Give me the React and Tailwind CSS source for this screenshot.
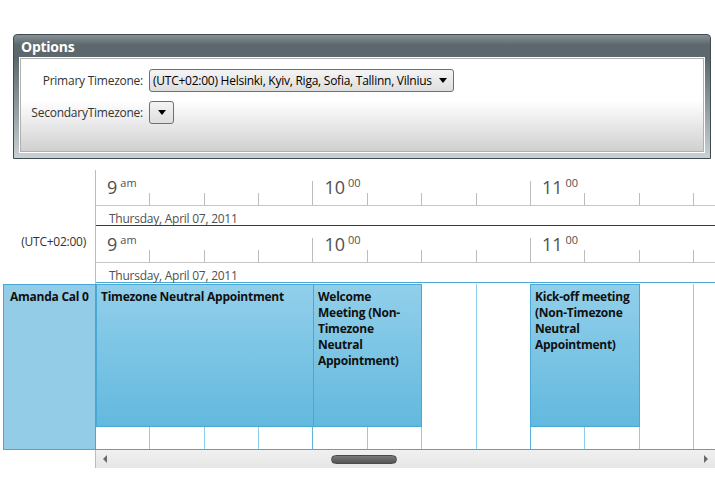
import React from "react";

const HOURS = [
  { h: "9", sup: "am" },
  { h: "10", sup: "00" },
  { h: "11", sup: "00" },
];

function HourHeader({ tall }) {
  return (
    <div className={`flex ${tall ? "h-[37px]" : "h-[36px]"} border-b border-[#c6c6c6]`}>
      {HOURS.map((hr) =>
        [0, 1, 2, 3].map((q) => (
          <div key={hr.h + q} className="w-[54.36px] shrink-0 flex flex-col justify-end">
            {q === 0 && (
              <div className="pl-[11px] h-[12px] leading-[12px] whitespace-nowrap text-[#505050] tracking-normal">
                <span className="text-[18px]">{hr.h}</span>
                <span className="text-[11px] relative -top-[7px] ml-[3px]">{hr.sup}</span>
              </div>
            )}
            <div className={`${q === 3 ? "h-[24px]" : "h-[12px]"} border-r border-[#bcbcbc]`} />
          </div>
        ))
      )}
    </div>
  );
}

function DateRow({ dark }) {
  return (
    <div
      className={`h-[20px] pl-[13px] pt-[5px] text-[12px] leading-[15px] text-[#505050] border-b ${
        dark ? "border-[#3a3a3a]" : "border-[#4aa6d3]"
      }`}
    >
      Thursday, April 07, 2011
    </div>
  );
}

function Appointment({ left, width, children }) {
  return (
    <div
      className="absolute top-0 h-[143px] border border-[#4aa8d5] bg-gradient-to-b from-[#91cfea] to-[#62b9de] px-[4px] pt-[4px] text-[12px] leading-[16px] font-bold text-[#101010]"
      style={{ left, width }}
    >
      {children}
    </div>
  );
}

export default function App() {
  return (
    <div className="w-[715px] h-[500px] bg-white overflow-hidden font-['Open_Sans',sans-serif] text-[12px] tracking-[-0.25px]">
      {/* Options panel */}
      <div className="pt-[34px] pl-[13px]">
        <div className="w-[698px] h-[125px] rounded-t-[4px] border border-[#3f4b50] bg-[linear-gradient(to_bottom,#879195_0px,#5c686c_10px,#5c686c_24px,#c9d1d5_100%)] px-[6px] pb-[6px] flex flex-col">
          <div className="h-[23px] flex items-center px-[1px] text-[14px] font-bold text-white">Options</div>
          <div className="flex-1 border border-[#b0b0b0] shadow-[0_0_0_1px_#ffffff] bg-[linear-gradient(to_bottom,#ffffff_0%,#ffffff_45%,#d0d0d0_100%)] pt-[10px]">
            <div className="flex items-center h-[23px]">
              <div className="w-[128px] text-right pr-[6px] text-[#333]">Primary Timezone:</div>
              <div className="w-[305px] h-[23px] rounded-[3px] border border-[#707070] bg-gradient-to-b from-[#f4f4f4] to-[#dedede] flex items-center justify-between pl-[3px] pr-[6px] text-black whitespace-nowrap">
                <span>(UTC+02:00) Helsinki, Kyiv, Riga, Sofia, Tallinn, Vilnius</span>
                <svg width="8" height="5" viewBox="0 0 8 5"><path d="M0 0h8L4 5z" fill="#000" /></svg>
              </div>
            </div>
            <div className="flex items-center h-[23px] mt-[9px]">
              <div className="w-[128px] text-right pr-[6px] text-[#333]">SecondaryTimezone:</div>
              <div className="w-[25px] h-[23px] rounded-[3px] border border-[#707070] bg-gradient-to-b from-[#f4f4f4] to-[#dedede] flex items-center justify-center">
                <svg width="8" height="5" viewBox="0 0 8 5"><path d="M0 0h8L4 5z" fill="#000" /></svg>
              </div>
            </div>
          </div>
        </div>
      </div>

      {/* Timeline */}
      <div className="mt-[11px] flex">
        <div className="w-[95px] shrink-0 flex flex-col">
          <div className="h-[57px]" />
          <div className="h-[57px] pr-[9px] pt-[6px] text-right text-[#333]">(UTC+02:00)</div>
        </div>
        <div className="flex-1 border-l border-[#bcbcbc] overflow-hidden">
          <HourHeader />
          <DateRow dark />
          <HourHeader tall />
          <DateRow />
        </div>
      </div>

      {/* Resource row */}
      <div className="flex h-[166px]">
        <div className="w-[96px] shrink-0 pl-[3px] ">
          <div className="h-full border border-[#4aa6d3] bg-[#93cce7] pl-[6px] pt-[3px] font-bold text-[#101010]">
            Amanda Cal 0
          </div>
        </div>
        <div className="flex-1 border-b border-[#4aa6d3] overflow-hidden relative">
          <div className="flex h-full">
            {Array.from({ length: 12 }).map((_, i) => (
              <div
                key={i}
                className={`w-[54.36px] shrink-0 h-full border-r ${i % 4 === 3 ? "border-[#5fb3db]" : "border-[#8ccfec]"}`}
              />
            ))}
          </div>
          <Appointment left="0px" width="218px">Timezone Neutral Appointment</Appointment>
          <Appointment left="217px" width="109px">Welcome Meeting (Non-Timezone Neutral Appointment)</Appointment>
          <Appointment left="434px" width="110px">Kick-off meeting (Non-Timezone Neutral Appointment)</Appointment>
        </div>
      </div>

      {/* Scrollbar */}
      <div className="flex h-[18px]">
        <div className="w-[95px] shrink-0" />
        <div className="flex-1 border-l border-[#bcbcbc] bg-gradient-to-b from-[#f0f0f0] to-[#e6e6e6] flex items-center px-[7px]">
          <svg width="4" height="8" viewBox="0 0 4 8"><path d="M4 0v8L0 4z" fill="#6a6a6a" /></svg>
          <div className="w-[224px] shrink-0" />
          <div className="w-[66px] h-[9px] rounded-full bg-gradient-to-b from-[#7a7a7a] to-[#545454] border border-[#4a4a4a]" />
          <div className="flex-1" />
          <svg width="4" height="8" viewBox="0 0 4 8"><path d="M0 0v8l4-4z" fill="#6a6a6a" /></svg>
        </div>
      </div>
    </div>
  );
}
